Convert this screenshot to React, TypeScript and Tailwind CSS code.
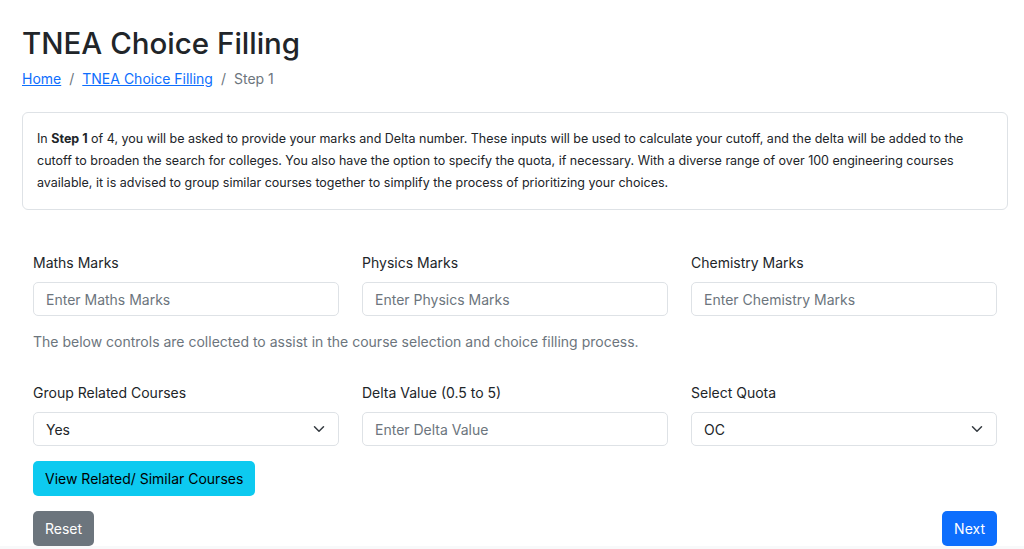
import React from "react";

const font = { fontFamily: 'Inter, "Liberation Sans", Arial, sans-serif' };

function Chevron() {
  return (
    <svg width="12" height="12" viewBox="0 0 16 16" className="absolute right-[13px] top-1/2 -translate-y-1/2">
      <path d="M2 5l6 6 6-6" fill="none" stroke="#343a40" strokeWidth="2" strokeLinecap="round" strokeLinejoin="round" />
    </svg>
  );
}

function Field({ label, placeholder }: { label: string; placeholder: string }) {
  return (
    <div className="flex flex-col">
      <label className="text-[14px] text-[#212529] leading-[20px] mb-[9px]">{label}</label>
      <div className="h-[34px] rounded-[5px] border border-[#dee2e6] bg-white flex items-center px-[12px] text-[14px] text-[#6c757d]">
        {placeholder}
      </div>
    </div>
  );
}

function SelectField({ label, value }: { label: string; value: string }) {
  return (
    <div className="flex flex-col">
      <label className="text-[14px] text-[#212529] leading-[20px] mb-[9px]">{label}</label>
      <div className="relative h-[34px] rounded-[5px] border border-[#dee2e6] bg-white flex items-center px-[12px] text-[14px] text-[#212529]">
        {value}
        <Chevron />
      </div>
    </div>
  );
}

export default function App() {
  return (
    <div className="min-h-[549px] bg-white" style={font}>
      <div className="pl-[22px] pr-[16px] pt-[25px]">
        <h1 className="text-[29.5px] leading-[36px] font-medium text-[#212529]">TNEA Choice Filling</h1>
        <nav className="mt-[8px] flex items-center text-[14px] leading-[20px] text-[#6c757d]">
          <a className="text-[#0d6efd] underline">Home</a>
          <span className="px-[8px]">/</span>
          <a className="text-[#0d6efd] underline">TNEA Choice Filling</a>
          <span className="px-[8px]">/</span>
          <span>Step 1</span>
        </nav>
        <div className="mt-[23px] rounded-[6px] border border-[#dee2e6] px-[14px] py-[15px] text-[12.5px] leading-[22px] text-[#212529]">
          In <b>Step 1</b> of 4, you will be asked to provide your marks and Delta number. These inputs will be used to calculate your cutoff, and the delta will be added to the cutoff to broaden the search for colleges. You also have the option to specify the quota, if necessary. With a diverse range of over 100 engineering courses available, it is advised to group similar courses together to simplify the process of prioritizing your choices.
        </div>
        <div className="px-[11px] pt-[43px]">
          <div className="grid grid-cols-3 gap-x-[23px]">
            <Field label="Maths Marks" placeholder="Enter Maths Marks" />
            <Field label="Physics Marks" placeholder="Enter Physics Marks" />
            <Field label="Chemistry Marks" placeholder="Enter Chemistry Marks" />
          </div>
          <p className="mt-[16px] text-[14px] leading-[20px] text-[#6c757d]">
            The below controls are collected to assist in the course selection and choice filling process.
          </p>
          <div className="mt-[31px] grid grid-cols-3 gap-x-[23px]">
            <SelectField label="Group Related Courses" value="Yes" />
            <Field label="Delta Value (0.5 to 5)" placeholder="Enter Delta Value" />
            <SelectField label="Select Quota" value="OC" />
          </div>
          <button className="mt-[15px] h-[35px] rounded-[5px] bg-[#0dcaf0] px-[12px] text-[14px] text-black">
            View Related/ Similar Courses
          </button>
          <div className="mt-[15px] flex justify-between">
            <button className="h-[35px] rounded-[5px] bg-[#6c757d] px-[12px] text-[14px] text-white">Reset</button>
            <button className="h-[35px] rounded-[5px] bg-[#0d6efd] px-[12px] text-[14px] text-white">Next</button>
          </div>
        </div>
      </div>
      <div className="h-[40px] bg-[#f8f9fa]"></div>
    </div>
  );
}
